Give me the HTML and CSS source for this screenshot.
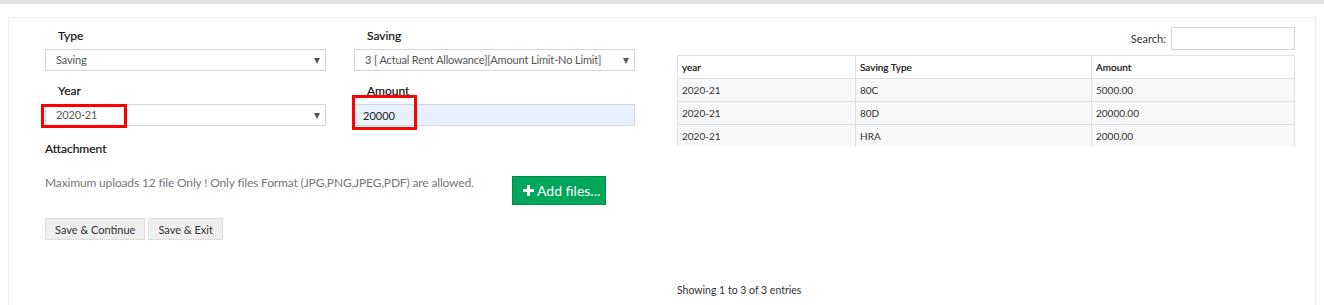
FILE: index.html
```html
<!DOCTYPE html>
<html lang="en">
<head>
    <meta charset="UTF-8" />
    <title>Saving Declaration</title>
    <link rel="stylesheet" href="styles.css">
</head>
<body>
    <div class="topbar"></div>

    <div class="panel">
        <div class="form-side">
            <div class="field-grid">
                <div class="field">
                    <label class="field-label">Type</label>
                    <div class="select-box">Saving</div>
                </div>
                <div class="field">
                    <label class="field-label">Saving</label>
                    <div class="select-box">3 [ Actual Rent Allowance][Amount Limit-No Limit]</div>
                </div>
                <div class="field">
                    <label class="field-label">Year</label>
                    <div class="select-box">2020-21</div>
                    <span class="mark mark-year"></span>
                </div>
                <div class="field">
                    <label class="field-label">Amount</label>
                    <input class="text-input" type="text" value="20000">
                    <span class="mark mark-amount"></span>
                </div>
            </div>

            <div class="attach-title">Attachment</div>
            <div class="attach-row">
                <span class="hint">Maximum uploads 12 file Only ! Only files Format (JPG,PNG,JPEG,PDF) are allowed.</span>
                <button class="btn-add">
                    <svg width="11" height="11" viewBox="0 0 11 11"><path d="M4 0h3v4h4v3H7v4H4V7H0V4h4z" fill="#fff"/></svg>
                    Add files...
                </button>
            </div>

            <div class="actions">
                <button class="btn-plain">Save &amp; Continue</button>
                <button class="btn-plain">Save &amp; Exit</button>
            </div>
        </div>

        <div class="table-side">
            <div class="search-row">
                <label>Search:</label>
                <input class="search-input" type="text">
            </div>
            <div class="table-scroll">
                <table class="data-table">
                    <thead>
                        <tr><th class="c-year">year</th><th class="c-type">Saving Type</th><th>Amount</th></tr>
                    </thead>
                    <tbody>
                        <tr><td>2020-21</td><td>80C</td><td>5000.00</td></tr>
                        <tr><td>2020-21</td><td>80D</td><td>20000.00</td></tr>
                        <tr><td>2020-21</td><td>HRA</td><td>2000.00</td></tr>
                    </tbody>
                </table>
            </div>
            <div class="table-info">Showing 1 to 3 of 3 entries</div>
        </div>
    </div>
</body>
</html>
```

FILE: styles.css
```css
body {
    margin: 0;
    font-family: Lato, "Open Sans", sans-serif;
    font-size: 12px;
    color: #333;
    background: #fff;
    overflow: hidden;
}

.topbar {
    height: 4px;
    background: #e2e3e5;
}

.panel {
    margin: 13px 8px 0 8px;
    height: 287px;
    border: 1px solid #eeeeee;
    border-bottom: none;
    display: grid;
    grid-template-columns: 590px 618px;
    column-gap: 42px;
    padding: 9px 0 0 36px;
}

/* form side */

.field-grid {
    display: grid;
    grid-template-columns: 281px 281px;
    column-gap: 28px;
    row-gap: 12px;
    padding-top: 1px;
}

.field {
    position: relative;
}

.field-label {
    display: block;
    height: 16px;
    line-height: 16px;
    margin: 0 0 5px 13px;
    color: #111;
    -webkit-text-stroke: 0.2px #111;
}

.select-box {
    position: relative;
    box-sizing: border-box;
    height: 22px;
    line-height: 20px;
    padding-left: 10px;
    border: 1px solid #d2d6de;
    color: #555;
    font-size: 11px;
    letter-spacing: -0.15px;
    white-space: nowrap;
}

.select-box::after {
    content: "";
    position: absolute;
    right: 5px;
    top: 8px;
    border-left: 3.5px solid transparent;
    border-right: 3.5px solid transparent;
    border-top: 6px solid #555;
}

.text-input {
    box-sizing: border-box;
    display: block;
    width: 100%;
    height: 22px;
    margin: 0;
    padding: 0 8px;
    border: 1px solid #d2d6de;
    background: #e8f0fe;
    font-family: inherit;
    font-size: 11px;
    color: #222;
    outline: none;
}

.mark {
    position: absolute;
    border: 3px solid #ff0000;
    pointer-events: none;
}

.mark-year {
    left: -4px;
    top: 21px;
    width: 80px;
    height: 18px;
}

.mark-amount {
    left: -2px;
    top: 12px;
    width: 59px;
    height: 29px;
}

.attach-title {
    margin-top: 15px;
    height: 16px;
    line-height: 16px;
    color: #111;
    -webkit-text-stroke: 0.2px #111;
}

.attach-row {
    display: flex;
    align-items: flex-start;
    margin-top: 18px;
}

.hint {
    color: #777;
    line-height: 16px;
    width: 467px;
    letter-spacing: -0.15px;
}

.btn-add {
    display: flex;
    align-items: center;
    gap: 3px;
    box-sizing: border-box;
    height: 29px;
    width: 94px;
    margin-top: 1px;
    padding: 0 0 0 10px;
    background: #00a65a;
    border: 1px solid #008d4c;
    color: #fff;
    font-family: inherit;
    font-size: 14px;
}

.actions {
    display: flex;
    gap: 3px;
    margin-top: 13px;
}

.btn-plain {
    box-sizing: border-box;
    height: 22px;
    padding: 0 9px;
    background: #efefef;
    border: 1px solid #dddddd;
    color: #333;
    font-family: inherit;
    font-size: 11px;
}

/* table side */

.search-row {
    display: flex;
    justify-content: flex-end;
    align-items: center;
    gap: 5px;
    font-size: 11px;
}

.search-input {
    box-sizing: border-box;
    width: 124px;
    height: 23px;
    margin: 0;
    border: 1px solid #d2d6de;
}

.table-scroll {
    margin-top: 5px;
    height: 91px;
    overflow: hidden;
}

.data-table {
    width: 100%;
    border-collapse: collapse;
    font-size: 10px;
}

.data-table th,
.data-table td {
    text-align: left;
    height: 14px;
    padding: 4px 4px;
    border: 1px solid #dce1e8;
    line-height: 14px;
    color: #333;
}

.data-table th {
    font-weight: normal;
    color: #111;
    -webkit-text-stroke: 0.2px #111;
    background: #fff;
}

.data-table tbody tr {
    background: #f8f8f8;
}

.c-year {
    width: 169px;
}

.c-type {
    width: 227px;
}

.table-info {
    margin-top: 138px;
    font-size: 10.5px;
}
```
